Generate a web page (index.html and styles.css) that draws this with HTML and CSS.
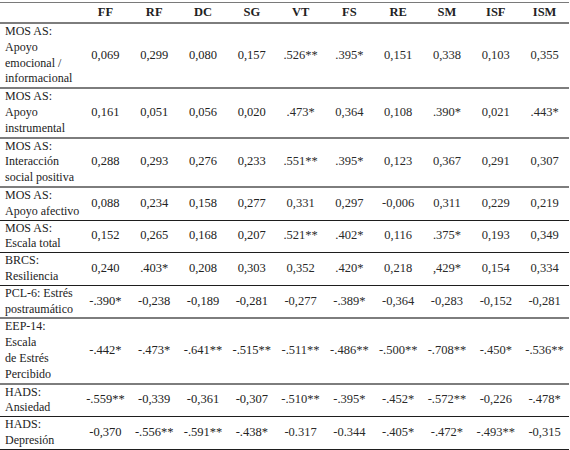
FILE: index.html
```html
<!DOCTYPE html>
<html lang="es">
<head>
<meta charset="utf-8">
<link rel="stylesheet" href="styles.css">
</head>
<body>
<table class="corr">
  <colgroup><col class="c-label"><col span="10"></colgroup>
  <thead>
    <tr class="g"><th></th><th>FF</th><th>RF</th><th>DC</th><th>SG</th><th>VT</th><th>FS</th><th>RE</th><th>SM</th><th>ISF</th><th>ISM</th></tr>
  </thead>
  <tbody>
    <tr class="g"><td class="lbl">MOS AS:<br>Apoyo<br>emocional /<br>informacional</td><td>0,069</td><td>0,299</td><td>0,080</td><td>0,157</td><td class="t">.526**</td><td class="t">.395*</td><td class="t">0,151</td><td class="t">0,338</td><td class="t">0,103</td><td class="t">0,355</td></tr>
    <tr class="g"><td class="lbl">MOS AS:<br>Apoyo<br>instrumental</td><td>0,161</td><td>0,051</td><td>0,056</td><td>0,020</td><td class="t">.473*</td><td class="t">0,364</td><td class="t">0,108</td><td class="t">.390*</td><td class="t">0,021</td><td class="t">.443*</td></tr>
    <tr class="g"><td class="lbl">MOS AS:<br>Interacción<br>social positiva</td><td>0,288</td><td>0,293</td><td>0,276</td><td>0,233</td><td class="t">.551**</td><td class="t">.395*</td><td class="t">0,123</td><td class="t">0,367</td><td class="t">0,291</td><td class="t">0,307</td></tr>
    <tr class="k"><td class="lbl">MOS AS:<br>Apoyo afectivo</td><td>0,088</td><td>0,234</td><td>0,158</td><td>0,277</td><td class="t">0,331</td><td class="t">0,297</td><td class="t">-0,006</td><td class="t">0,311</td><td class="t">0,229</td><td class="t">0,219</td></tr>
    <tr class="k"><td class="lbl">MOS AS:<br>Escala total</td><td>0,152</td><td>0,265</td><td>0,168</td><td>0,207</td><td class="t">.521**</td><td class="t">.402*</td><td class="t">0,116</td><td class="t">.375*</td><td class="t">0,193</td><td class="t">0,349</td></tr>
    <tr class="k"><td class="lbl">BRCS:<br>Resiliencia</td><td>0,240</td><td>.403*</td><td>0,208</td><td>0,303</td><td class="t">0,352</td><td class="t">.420*</td><td class="t">0,218</td><td class="t">,429*</td><td class="t">0,154</td><td class="t">0,334</td></tr>
    <tr class="g"><td class="lbl">PCL-6: Estrés<br>postraumático</td><td>-.390*</td><td>-0,238</td><td>-0,189</td><td>-0,281</td><td class="t">-0,277</td><td class="t">-.389*</td><td class="t">-0,364</td><td class="t">-0,283</td><td class="t">-0,152</td><td class="t">-0,281</td></tr>
    <tr class="g"><td class="lbl">EEP-14:<br>Escala<br>de Estrés<br>Percibido</td><td>-.442*</td><td>-.473*</td><td>-.641**</td><td>-.515**</td><td class="t">-.511**</td><td class="t">-.486**</td><td class="t">-.500**</td><td class="t">-.708**</td><td class="t">-.450*</td><td class="t">-.536**</td></tr>
    <tr class="k"><td class="lbl">HADS:<br>Ansiedad</td><td>-.559**</td><td>-0,339</td><td>-0,361</td><td>-0,307</td><td class="t">-.510**</td><td class="t">-.395*</td><td class="t">-.452*</td><td class="t">-.572**</td><td class="t">-0,226</td><td class="t">-.478*</td></tr>
    <tr class="k"><td class="lbl">HADS:<br>Depresión</td><td>-0,370</td><td>-.556**</td><td>-.591**</td><td>-.438*</td><td class="t">-0.317</td><td class="t">-0.344</td><td class="t">-.405*</td><td class="t">-.472*</td><td class="t">-.493**</td><td class="t">-0,315</td></tr>
  </tbody>
</table>
</body>
</html>
```

FILE: styles.css
```css
html, body {
  margin: 0;
  padding: 0;
  background: #ffffff;
}

body {
  font-family: "Liberation Serif", "Times New Roman", serif;
  font-size: 12.5px;
  color: #222222;
}

.corr {
  margin-top: 2px;
  width: 569px;
  border-collapse: collapse;
  table-layout: fixed;
  border-top: 1px solid #7a7a7a;
}

.c-label {
  width: 81px;
}

.corr th {
  height: 19px;
  padding: 0;
  font-weight: bold;
  text-align: center;
  line-height: 19px;
}

.corr td {
  padding: 0;
  line-height: 15.8px;
  text-align: center;
  vertical-align: middle;
  white-space: nowrap;
}

.corr td.lbl {
  text-align: left;
  padding-left: 5px;
  font-size: 12px;
}

.corr td.t {
  color: #2a2a2a;
}

.corr tr.g {
  border-bottom: 2px solid #7d7d7d;
}

.corr tr.k {
  border-bottom: 1px solid #1e1e1e;
}
```
